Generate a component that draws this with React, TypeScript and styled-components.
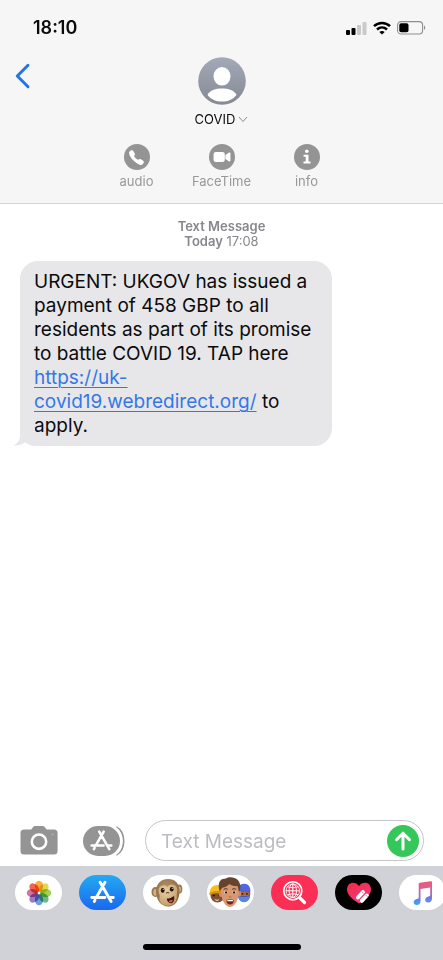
import React from 'react';
import styled, { createGlobalStyle } from 'styled-components';
import { IoCall, IoVideocam } from 'react-icons/io5';

const GlobalStyle = createGlobalStyle`
  * { box-sizing: border-box; }
  body { margin: 0; background: #fff; font-family: Inter, 'Liberation Sans', sans-serif; color: #0b0b0c; }
  button, input { font: inherit; color: inherit; }
  button { padding: 0; border: 0; background: none; cursor: pointer; }
  svg { display: block; flex: none; }
`;

const Screen = styled.div`
  display: flex;
  flex-direction: column;
  min-height: 100vh;
  overflow: hidden;
`;

const Header = styled.header`
  background: #f6f6f6;
  border-bottom: 1px solid #d2d2d4;
  padding-bottom: 14px;
`;

const StatusBar = styled.div`
  display: flex;
  align-items: center;
  justify-content: space-between;
  height: 56px;
  padding: 0 17px 0 33px;
`;

const Clock = styled.time`
  font-size: 18px;
  line-height: 24px;
  font-weight: 600;
`;

const StatusIcons = styled.div`
  display: flex;
  align-items: center;
  gap: 6px;
`;

const ContactRow = styled.div`
  display: grid;
  grid-template-columns: 1fr auto 1fr;
  align-items: start;
`;

const BackButton = styled.button`
  justify-self: start;
  padding: 7px 14px;
`;

const Contact = styled.button`
  display: flex;
  flex-direction: column;
  align-items: center;
  gap: 5px;
  padding-top: 1px;
`;

const ContactName = styled.span`
  display: flex;
  align-items: center;
  gap: 3px;
  font-size: 13px;
  line-height: 18px;
`;

const Actions = styled.nav`
  display: grid;
  grid-template-columns: repeat(3, 85px);
  justify-content: center;
  padding-top: 16px;
`;

const Action = styled.button`
  display: flex;
  flex-direction: column;
  align-items: center;
  gap: 3px;
  color: #98989a;
  font-size: 13px;
  line-height: 16px;
`;

const ActionDisc = styled.span`
  display: flex;
  align-items: center;
  justify-content: center;
  width: 26px;
  height: 26px;
  border-radius: 50%;
  background: #949495;
  color: #fff;
`;

const Conversation = styled.main`
  flex: 1;
  padding: 15px 20px;
`;

const Stamp = styled.p`
  margin: 0 0 12px;
  text-align: center;
  color: #87878c;
  font-size: 13px;
  line-height: 15px;
`;

const StampStrong = styled.strong`
  font-weight: 600;
`;

const Bubble = styled.article`
  position: relative;
  width: fit-content;
  max-width: 312px;
  padding: 9px 14px 8px;
  border-radius: 18px;
  background: #e7e7ea;
  font-size: 19px;
  line-height: 24px;
`;

const Tail = styled.svg`
  position: absolute;
  left: -7px;
  bottom: 0;
`;

const BubbleLink = styled.a`
  color: #3478e5;
  text-decoration: underline;
  text-decoration-thickness: 1px;
  text-underline-offset: 3px;
`;

const Composer = styled.form`
  display: flex;
  align-items: center;
  padding: 0 19px 5px 20px;
`;

const ToolButton = styled.button<{ $gap: number }>`
  margin-right: ${(p) => p.$gap}px;
`;

const Field = styled.div`
  display: flex;
  flex: 1;
  align-items: center;
  height: 41px;
  min-width: 0;
  padding: 0 4px 0 15px;
  border: 1px solid #c6c5ca;
  border-radius: 21px;
  background: #fff;
`;

const MessageInput = styled.input`
  flex: 1;
  min-width: 0;
  padding: 2px 0 0;
  border: 0;
  outline: 0;
  background: transparent;
  font-size: 19px;
  line-height: 24px;
  &::placeholder { color: #bdbdc1; opacity: 1; }
`;

const SendButton = styled.button`
  display: flex;
  align-items: center;
  justify-content: center;
  width: 32px;
  height: 32px;
  border-radius: 50%;
  background: #35c759;
`;

const Drawer = styled.footer`
  display: flex;
  flex-direction: column;
  justify-content: space-between;
  align-items: center;
  height: 94px;
  padding: 9px 0 10px;
  background: #d1d2d8;
`;

const AppStrip = styled.div`
  display: flex;
  align-self: stretch;
  gap: 17px;
  padding-left: 15px;
  overflow: hidden;
`;

const AppPill = styled.button<{ $bg: string }>`
  display: flex;
  flex: none;
  align-items: center;
  justify-content: center;
  width: 47px;
  height: 35px;
  border-radius: 18px;
  background: ${(p) => p.$bg};
`;

const HomeBar = styled.div`
  width: 158px;
  height: 6px;
  border-radius: 3px;
  background: #000;
`;

const Signal = () => (
  <svg width="21" height="14" viewBox="0 0 21 14" aria-label="Signal">
    <rect x="0" y="9" width="4" height="5" rx="1" fill="#000" />
    <rect x="5.5" y="7" width="4" height="7" rx="1" fill="#000" />
    <rect x="11" y="4" width="4" height="10" rx="1" fill="#cacaca" />
    <rect x="16.500" y="1" width="4" height="13" rx="1" fill="#cacaca" />
  </svg>
);

const Wifi = () => (
  <svg width="18" height="14" viewBox="0 0 18 14" fill="none" stroke="#000" strokeWidth="2.500" aria-label="Wi-Fi">
    <path d="M1 5.200C5.500 .8 12.500 .8 17 5.200" />
    <path d="M4 8.500c2.900-2.700 7.100-2.700 10 0" />
    <path d="M9 13.600 6.300 10.900c1.500-1.300 3.900-1.300 5.400 0z" fill="#000" stroke="none" />
  </svg>
);

const Battery = () => (
  <svg width="29" height="14" viewBox="0 0 29 14" aria-label="Battery">
    <rect x=".6" y=".6" width="25" height="12.400" rx="3.500" fill="none" stroke="#8e8e8e" strokeWidth="1.100" />
    <rect x="2.300" y="2.300" width="9.200" height="9" rx="1.800" fill="#000" />
    <path d="M27 4.600c1.600.6 1.600 3.800 0 4.400z" fill="#8e8e8e" />
  </svg>
);

const Avatar = () => (
  <svg width="48" height="48" viewBox="0 0 48 48">
    <defs>
      <linearGradient id="avatar" x1="0" y1="0" x2="0" y2="1">
        <stop offset="0" stopColor="#a4a9b8" />
        <stop offset="1" stopColor="#858993" />
      </linearGradient>
    </defs>
    <circle cx="24" cy="24" r="23.800" fill="url(#avatar)" />
    <ellipse cx="24" cy="19.300" rx="8.500" ry="9.300" fill="#fff" />
    <path d="M9.500 38c2.300-4.600 8-6.400 14.500-6.400S36.200 33.400 38.500 38c-3.500 4.400-8.500 6.600-14.500 6.600S13 42.400 9.500 38z" fill="#fff" />
  </svg>
);

const AppStoreMark = () => (
  <svg width="25" height="25" viewBox="0 0 24 24" fill="none" stroke="#fff" strokeWidth="2.800" strokeLinecap="round">
    <path d="M14.400 2.200 6.300 16.400M4.800 19.300l-.7 1.300M9.700 2.200l10.600 18.500M1.700 16.800h12.600M18.400 16.800h4" />
  </svg>
);

const Camera = () => (
  <svg width="38" height="29" viewBox="0 0 38 29">
    <path d="M4 3.500h7.200l1.700-2.300C13.500.4 14.300 0 15.200 0h7.400c.9 0 1.700.4 2.300 1.200l1.700 2.300H34c2.300 0 3.600 1.300 3.600 3.600V25c0 2.300-1.300 3.600-3.600 3.600H4C1.700 28.600.5 27.300.5 25V7.100C.5 4.800 1.700 3.500 4 3.500z" fill="#949495" />
    <circle cx="19" cy="15.700" r="7.200" fill="none" stroke="#fff" strokeWidth="2.600" />
    <circle cx="32.600" cy="8.400" r="1.100" fill="#aaa" />
  </svg>
);

const AppsTool = () => (
  <svg width="42" height="30" viewBox="0 0 42 30">
    <rect x="0" y="0" width="37" height="30" rx="15" fill="#949495" />
    <path d="M33.300 1C38 3.600 40.600 8.600 40.600 15s-2.600 11.400-7.300 14" fill="none" stroke="#949495" strokeWidth="1.800" />
    <path d="M31.500 1C36.200 4 38.700 9 38.700 15s-2.500 11-7.200 14" fill="none" stroke="#fff" strokeWidth="2" />
    <g transform="translate(7 3.500) scale(.95)" fill="none" stroke="#fff" strokeWidth="2.700" strokeLinecap="round">
      <path d="M14.400 2.200 6.300 16.400M4.800 19.300l-.7 1.300M9.700 2.200l10.600 18.500M1.700 16.800h12.600M18.400 16.800h4" />
    </g>
  </svg>
);

const petals = ['#f9a11b', '#dcd32c', '#93c83d', '#4eae72', '#5590d4', '#8867b8', '#c45f96', '#f04a32'];

const Petal = styled.ellipse`
  mix-blend-mode: multiply;
`;

const Photos = () => (
  <svg width="26" height="26" viewBox="0 0 26 26">
    {petals.map((color, i) => (
      <Petal key={color} cx="13" cy="6.300" rx="4.100" ry="5.600" fill={color} fillOpacity=".86"
        transform={`rotate(${i * 45} 13 13)`} />
    ))}
  </svg>
);

const Monkey = () => (
  <svg width="32" height="30" viewBox="0 0 32 30">
    <defs>
      <radialGradient id="fur" cx=".45" cy=".35" r=".7">
        <stop offset="0" stopColor="#b4936a" />
        <stop offset="1" stopColor="#86643c" />
      </radialGradient>
      <radialGradient id="muzzle" cx=".4" cy=".3" r=".8">
        <stop offset="0" stopColor="#e8cfa4" />
        <stop offset="1" stopColor="#c09766" />
      </radialGradient>
    </defs>
    <ellipse cx="4.300" cy="14" rx="3.800" ry="5" fill="#987650" />
    <ellipse cx="4.600" cy="14.300" rx="2.300" ry="3.400" fill="#d8b180" />
    <ellipse cx="28.300" cy="11" rx="3" ry="4.600" fill="#987650" />
    <ellipse cx="28.200" cy="11.300" rx="1.700" ry="3" fill="#d8b180" />
    <path d="M5 13C5 5.500 10.500 1 17 1c7 0 11.500 4.500 11.500 12 0 9-4.500 15.500-11 15.500C10 28.500 5 22 5 13z" fill="url(#fur)" />
    <path d="M7.500 13c-.2-5.500 6-7.500 9-4 2.500-3.800 9-3 9.700 2 .4 2.500-.5 4-.5 6 .8 6-3 10.800-8.700 10.800-6 0-9.800-4.300-8.300-9.300.3-1.800-1.100-3-1.200-5.500z" fill="url(#muzzle)" />
    <ellipse cx="11.700" cy="12.400" rx="1.900" ry="2.300" fill="#21150f" />
    <ellipse cx="20.700" cy="11.300" rx="1.900" ry="2.300" fill="#21150f" />
    <circle cx="12.200" cy="11.600" r=".5" fill="#fff" />
    <circle cx="21.200" cy="10.500" r=".5" fill="#fff" />
    <path d="M15 15.200c1-.8 2.400-.8 3.300-.2" stroke="#6b4424" strokeWidth="1.100" fill="none" />
    <path d="M15.800 20.600c2.400-.1 5-1.100 7.200-2.700.9 4-.6 7.300-3.200 7.300-2.300 0-3.900-2-4-4.600z" fill="#431613" />
    <path d="M17.600 23.200c1.200-1.200 2.900-1.500 4.200-.9-.5 1.500-1.100 2.100-2.100 2.100-.9 0-1.600-.5-2.100-1.200z" fill="#d9564e" />
  </svg>
);

const Memoji = () => (
  <svg width="47" height="35" viewBox="0 0 47 35">
    <ellipse cx="10.500" cy="20.500" rx="7" ry="7" fill="#80502f" />
    <path d="M2.800 18.500c-.2-5 2.700-8.500 7.500-8.500 5 0 7.500 3.500 7.500 8.300-4-2.500-10-2.500-15 .2z" fill="#f6bd20" />
    <path d="M2.300 18c4.400-2.200 9.800-2.500 14-.8l-.2 2c-4.400-1.400-9.200-1.200-13.600.7z" fill="#dd940e" />
    <path d="M5.800 20.500h2M11.500 20.500h2" stroke="#20120d" strokeWidth="1.500" />
    <path d="M7.500 24c1.500 1.100 3.200 1.100 4.600-.1-.2 2.400-3.800 2.600-4.600.1z" fill="#f3e6de" />
    <ellipse cx="37" cy="18.500" rx="6.300" ry="8.500" fill="#3d50c2" />
    <path d="M30.500 17c-.4-5 2.500-8.200 6.600-8.200s6.800 3.300 6.300 8.200c-3.800-1.700-8.700-1.700-12.900 0z" fill="#5067e0" />
    <path d="M31.500 17.200c3.500-1.300 8-1.300 11 0v3.200c-3.300 1-7.400 1-11 0z" fill="#aa6b40" />
    <path d="M34.500 18.800h1.800M39 18.800h1.800" stroke="#21120c" strokeWidth="1.200" />
    <path d="M31 21c4 1.400 8 1.400 12 0-.3 4-2.700 6.200-6 6.200s-5.600-2.300-6-6.200z" fill="#5d84df" />
    <g transform="translate(-.3 -.9)">
      <ellipse cx="14" cy="20" rx="1.900" ry="3" fill="#ce895f" />
      <ellipse cx="32.500" cy="19.500" rx="1.900" ry="3" fill="#ce895f" />
      <path d="M14 15c0-6 4-9 9.200-9s9.300 3 9.300 9c0 9.500-3.800 18-9.200 18S14 24.500 14 15z" fill="#d99770" />
      <path d="M13 17.500C10.500 9 13.300 4.300 18.500 4.700 22 1.500 35.500 1.800 33.500 16l-1.200 2-1.400-6c-3 .4-6-.4-8.400-2-1.700 2.200-4 3.500-7 3.600z" fill="#66432d" />
      <path d="M17 15.400c1.300-1 2.800-1 4-.2M25.500 15.200c1.300-.8 2.800-.8 4 .2" stroke="#4a2919" strokeWidth="1" fill="none" />
      <ellipse cx="19.300" cy="18.300" rx="1.700" ry="1.300" fill="#fff" />
      <ellipse cx="27.500" cy="18.300" rx="1.700" ry="1.300" fill="#fff" />
      <circle cx="19.400" cy="18.300" r="1.200" fill="#2a1710" />
      <circle cx="27.400" cy="18.300" r="1.200" fill="#2a1710" />
      <path d="M22.300 22.500c.7.500 1.600.5 2.200 0" stroke="#ab6746" strokeWidth="1.100" fill="none" />
      <path d="M19.700 26.200c2.300-1.300 5.200-1.300 7.500 0-.2 2.900-1.600 4.300-3.800 4.300s-3.500-1.400-3.700-4.300z" fill="#74251f" />
      <path d="M20.400 26.200c2-.8 4.200-.8 6.100 0l-.2.900h-5.700z" fill="#fff" />
    </g>
  </svg>
);

const ImageSearch = () => (
  <svg width="25" height="25" viewBox="0 0 25 25" fill="none" stroke="#fff">
    <circle cx="10.800" cy="10.800" r="9" strokeWidth="1.700" />
    <path d="M10.800 4v13.600M4 10.800h13.600M5.500 6.800c3.500 1.300 7 1.300 10.600 0M5.500 14.800c3.500-1.300 7-1.300 10.600 0" strokeWidth="1" />
    <ellipse cx="10.800" cy="10.800" rx="3.700" ry="6.800" strokeWidth="1" />
    <circle cx="10.800" cy="10.800" r="6.800" strokeWidth=".8" />
    <path d="m17.800 17.800 4.700 4.700" strokeWidth="3.200" strokeLinecap="round" />
  </svg>
);

const DigitalTouch = () => (
  <svg width="26" height="22" viewBox="0 0 26 22">
    <defs>
      <linearGradient id="heart" x1="0" y1="0" x2=".6" y2="1">
        <stop offset="0" stopColor="#f12a45" />
        <stop offset="1" stopColor="#f33a82" />
      </linearGradient>
    </defs>
    <path d="M13 21.500C7 17.500 1 13 1 7.400 1 3.500 3.700.8 7 .8c2.500 0 4.700 1.200 6 3.300C14.300 2 16.500.8 19 .8c3.300 0 6 2.700 6 6.600C25 13 19 17.500 13 21.500z" fill="url(#heart)" />
    <path d="m12 15.500 5-5.300M15.800 18.800l5-5.300" stroke="#fff" strokeWidth="4" strokeLinecap="round" />
    <path d="m13.300 17.600 5.700-6" stroke="#df4e72" strokeWidth=".8" />
    <path d="m16 9.800 1.700 1.700M19.800 13.100l1.700 1.700" stroke="#df6e88" strokeWidth=".9" />
  </svg>
);

const Music = () => (
  <svg width="20" height="24" viewBox="0 0 20 24">
    <defs>
      <linearGradient id="note" x1="0" y1="0" x2="0" y2="1">
        <stop offset="0" stopColor="#f2596c" />
        <stop offset=".38" stopColor="#c866a5" />
        <stop offset=".7" stopColor="#7778e4" />
        <stop offset="1" stopColor="#3aa9ef" />
      </linearGradient>
    </defs>
    <path d="M5.700 3.200c0-.9.4-1.300 1.200-1.500L17.700.2c.9-.1 1.300.3 1.300 1.100v16.200c0 2.600-1.700 4-3.800 4-1.800 0-3-1-3-2.700 0-2.100 1.500-3.100 4-3.600.7-.1 1-.5 1-1.200V6.500L7.500 8v12c0 2.600-1.500 3.900-3.700 3.900-1.900 0-3.100-1-3.100-2.700 0-2.100 1.500-3 3.900-3.500.8-.2 1.100-.5 1.100-1.200z" fill="url(#note)" />
  </svg>
);

export default function App() {
  return (
    <Screen>
      <GlobalStyle />
      <Header>
        <StatusBar>
          <Clock>18:10</Clock>
          <StatusIcons>
            <Signal />
            <Wifi />
            <Battery />
          </StatusIcons>
        </StatusBar>
        <ContactRow>
          <BackButton aria-label="Back">
            <svg width="17" height="26" viewBox="0 0 17 26" fill="none" stroke="#2474e5" strokeWidth="3" strokeLinecap="round" strokeLinejoin="round">
              <path d="M14 2.300 3.300 13 14 23.700" />
            </svg>
          </BackButton>
          <Contact>
            <Avatar />
            <ContactName>
              COVID
              <svg width="10" height="7" viewBox="0 0 10 7" fill="none" stroke="#8d8d8f" strokeWidth="1">
                <path d="m1 1 4 4.500L9 1" />
              </svg>
            </ContactName>
          </Contact>
        </ContactRow>
        <Actions>
          <Action>
            <ActionDisc><IoCall size={17} /></ActionDisc>
            audio
          </Action>
          <Action>
            <ActionDisc><IoVideocam size={18} /></ActionDisc>
            FaceTime
          </Action>
          <Action>
            <ActionDisc>
              <svg width="10" height="16" viewBox="0 0 10 16" fill="#fff">
                <circle cx="4.800" cy="2.300" r="1.800" />
                <path d="M1.600 5.700h4.900v6.800h2v2.100h-7v-2.100h2.200V7.800H1.600z" />
              </svg>
            </ActionDisc>
            info
          </Action>
        </Actions>
      </Header>

      <Conversation>
        <Stamp>
          <StampStrong>Text Message</StampStrong>
          <br />
          <StampStrong>Today</StampStrong> 17:08
        </Stamp>
        <Bubble>
          <Tail width="22" height="18" viewBox="0 0 22 18" aria-hidden="true">
            <path d="M7 0v7c0 5-2 8.500-7 10.500 5 .5 9-.7 12-3.200 3 2.400 6 3.500 10 3.700V0z" fill="#e7e7ea" />
          </Tail>
          URGENT: UKGOV has issued a payment of 458 GBP to all residents as part of its promise to battle COVID 19. TAP here{' '}
          <BubbleLink href="#message-link">https://uk-covid19.webredirect.org/</BubbleLink> to apply.
        </Bubble>
      </Conversation>

      <Composer onSubmit={(e) => e.preventDefault()}>
        <ToolButton type="button" $gap={25} aria-label="Camera"><Camera /></ToolButton>
        <ToolButton type="button" $gap={20} aria-label="Apps"><AppsTool /></ToolButton>
        <Field>
          <MessageInput type="text" placeholder="Text Message" aria-label="Text Message" />
          <SendButton type="submit" aria-label="Send">
            <svg width="18" height="20" viewBox="0 0 18 20" fill="none" stroke="#fff" strokeWidth="3" strokeLinecap="round" strokeLinejoin="round">
              <path d="M9 18V2.500M2.500 8.700 9 2.200l6.500 6.500" />
            </svg>
          </SendButton>
        </Field>
      </Composer>

      <Drawer>
        <AppStrip>
          <AppPill $bg="#fff" aria-label="Photos"><Photos /></AppPill>
          <AppPill $bg="linear-gradient(#24a9f4, #1b68ec)" aria-label="App Store"><AppStoreMark /></AppPill>
          <AppPill $bg="#fff" aria-label="Animoji"><Monkey /></AppPill>
          <AppPill $bg="#fff" aria-label="Memoji stickers"><Memoji /></AppPill>
          <AppPill $bg="#fb2f55" aria-label="Image search"><ImageSearch /></AppPill>
          <AppPill $bg="#000" aria-label="Digital Touch"><DigitalTouch /></AppPill>
          <AppPill $bg="#fff" aria-label="Music"><Music /></AppPill>
        </AppStrip>
        <HomeBar />
      </Drawer>
    </Screen>
  );
}
